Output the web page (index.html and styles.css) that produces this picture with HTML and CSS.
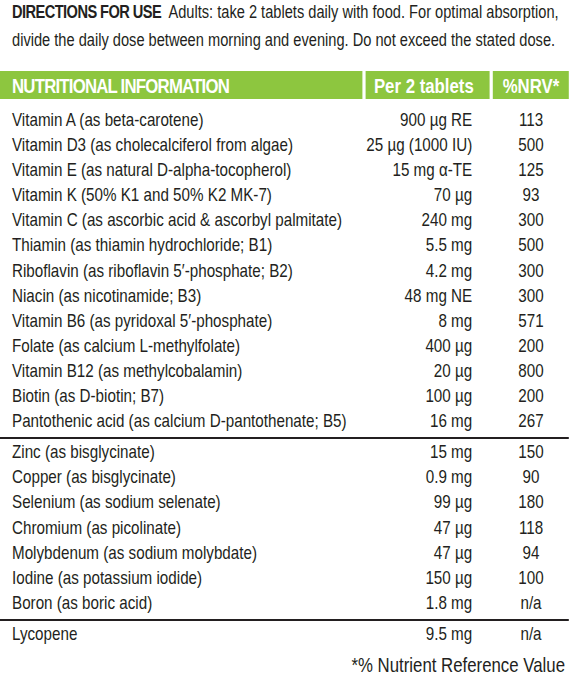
FILE: index.html
```html
<!DOCTYPE html>
<html lang="en">
<head>
    <meta charset="UTF-8">
    <meta name="viewport" content="width=device-width, initial-scale=1.0">
    <title>Directions and Nutritional Information</title>
    <link rel="stylesheet" href="styles.css">
</head>
<body>
    <div class="page">
        <div class="sheet">
            <p class="directions"><strong>DIRECTIONS FOR USE</strong> Adults: take 2 tablets daily with food. For optimal absorption,<br>divide the daily dose between morning and evening. Do not exceed the stated dose.</p>

            <div class="nutrition">
                <div class="head-row">
                    <div class="head-cell title">NUTRITIONAL INFORMATION</div>
                    <div class="head-cell amount">Per 2 tablets</div>
                    <div class="head-cell nrv">%NRV*</div>
                </div>

                <div class="group">
                    <div class="row"><span>Vitamin A (as beta-carotene)</span><span class="amount">900 µg RE</span><span class="nrv">113</span></div>
                    <div class="row"><span>Vitamin D3 (as cholecalciferol from algae)</span><span class="amount">25 µg (1000 IU)</span><span class="nrv">500</span></div>
                    <div class="row"><span>Vitamin E (as natural D-alpha-tocopherol)</span><span class="amount">15 mg α-TE</span><span class="nrv">125</span></div>
                    <div class="row"><span>Vitamin K (50% K1 and 50% K2 MK-7)</span><span class="amount">70 µg</span><span class="nrv">93</span></div>
                    <div class="row"><span>Vitamin C (as ascorbic acid &amp; ascorbyl palmitate)</span><span class="amount">240 mg</span><span class="nrv">300</span></div>
                    <div class="row"><span>Thiamin (as thiamin hydrochloride; B1)</span><span class="amount">5.5 mg</span><span class="nrv">500</span></div>
                    <div class="row"><span>Riboflavin (as riboflavin 5′-phosphate; B2)</span><span class="amount">4.2 mg</span><span class="nrv">300</span></div>
                    <div class="row"><span>Niacin (as nicotinamide; B3)</span><span class="amount">48 mg NE</span><span class="nrv">300</span></div>
                    <div class="row"><span>Vitamin B6 (as pyridoxal 5′-phosphate)</span><span class="amount">8 mg</span><span class="nrv">571</span></div>
                    <div class="row"><span>Folate (as calcium L-methylfolate)</span><span class="amount">400 µg</span><span class="nrv">200</span></div>
                    <div class="row"><span>Vitamin B12 (as methylcobalamin)</span><span class="amount">20 µg</span><span class="nrv">800</span></div>
                    <div class="row"><span>Biotin (as D-biotin; B7)</span><span class="amount">100 µg</span><span class="nrv">200</span></div>
                    <div class="row"><span>Pantothenic acid (as calcium D-pantothenate; B5)</span><span class="amount">16 mg</span><span class="nrv">267</span></div>
                </div>

                <div class="group">
                    <div class="row"><span>Zinc (as bisglycinate)</span><span class="amount">15 mg</span><span class="nrv">150</span></div>
                    <div class="row"><span>Copper (as bisglycinate)</span><span class="amount">0.9 mg</span><span class="nrv">90</span></div>
                    <div class="row"><span>Selenium (as sodium selenate)</span><span class="amount">99 µg</span><span class="nrv">180</span></div>
                    <div class="row"><span>Chromium (as picolinate)</span><span class="amount">47 µg</span><span class="nrv">118</span></div>
                    <div class="row"><span>Molybdenum (as sodium molybdate)</span><span class="amount">47 µg</span><span class="nrv">94</span></div>
                    <div class="row"><span>Iodine (as potassium iodide)</span><span class="amount">150 µg</span><span class="nrv">100</span></div>
                    <div class="row"><span>Boron (as boric acid)</span><span class="amount">1.8 mg</span><span class="nrv">n/a</span></div>
                </div>

                <div class="group">
                    <div class="row"><span>Lycopene</span><span class="amount">9.5 mg</span><span class="nrv">n/a</span></div>
                </div>
            </div>

            <p class="footnote">*% Nutrient Reference Value</p>
        </div>
    </div>
</body>
</html>
```

FILE: styles.css
```css
/* the label type is a condensed face; none is installed, so the sheet is squeezed */
body {
    font-family: "Liberation Sans", Arial, sans-serif;
    background-color: white;
    color: #231f20;
    margin: 0;
    padding: 0;
}
.page {
    overflow: hidden;
}
.sheet {
    width: 125%;
    transform: scaleX(0.8);
    transform-origin: left top;
}
.directions {
    margin: -2px 0 0;
    padding: 0 0 0 15px;
    font-size: 18.3px;
    line-height: 28px;
    white-space: nowrap;
}
.directions strong {
    margin-right: 5px;
    letter-spacing: -0.7px;
}
.nutrition {
    margin-top: 17px;
}
.head-row,
.row {
    display: grid;
    grid-template-columns: 1fr 155px 95px;
    column-gap: 4px;
}
.head-cell {
    background-color: #8dc63f;
    color: white;
    font-weight: bold;
    font-size: 21px;
    height: 28px;
    line-height: 29px;
}
.head-cell.title {
    padding-left: 15px;
    letter-spacing: -1px;
}
.head-cell.amount {
    padding-right: 20px;
    text-align: right;
}
.head-cell.nrv {
    text-align: center;
}
.head-row + .group {
    padding-top: 8px;
}
.group + .group {
    margin-top: 4px;
    border-top: 2px solid #231f20;
}
.row {
    font-size: 19px;
    line-height: 25.1px;
}
.row span:first-child {
    padding-left: 15px;
    white-space: nowrap;
}
.row .amount {
    text-align: right;
    padding-right: 22px;
}
.row .nrv {
    text-align: center;
}
.footnote {
    margin: 7px 5px 0 0;
    text-align: right;
    font-size: 21px;
}
```
